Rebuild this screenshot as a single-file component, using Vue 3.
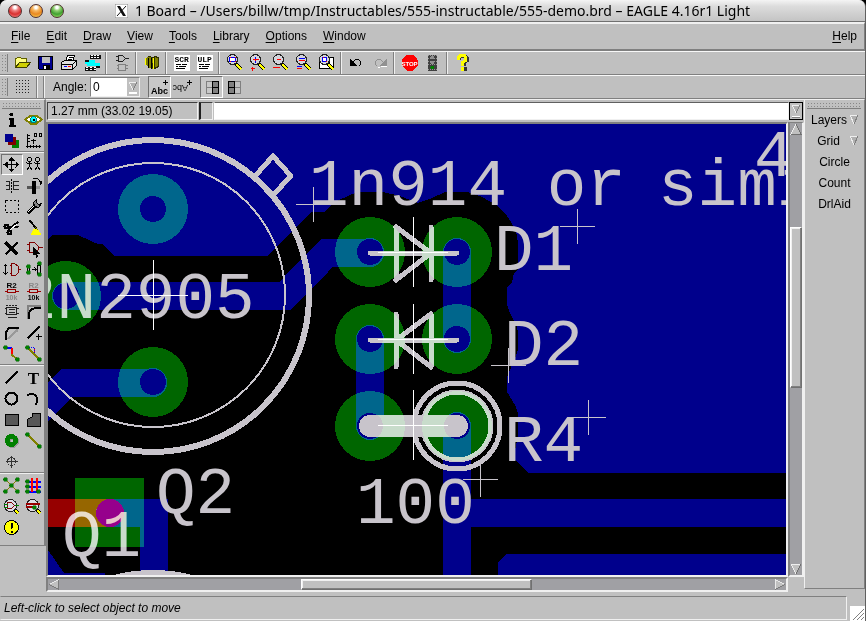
<script setup>
import { ref } from 'vue'

const menus = ['File', 'Edit', 'Draw', 'View', 'Tools', 'Library', 'Options', 'Window']
const layerItems = [
  { name: 'Layers', drop: true },
  { name: 'Grid', drop: true },
  { name: 'Circle' },
  { name: 'Count' },
  { name: 'DrlAid' },
]
const angle = ref('0')
const command = ref('')
const activeTool = ref('Move')

const lens = (mark, extra = '') =>
  `<path d="M11 11l6 6" stroke="#000" stroke-width="4"/><path d="M12 12l5 5" stroke="#ff0" stroke-width="2"/>
   <circle cx="8" cy="7" r="5" fill="#d4d4dc" stroke="#222"/>${mark}${extra}`

const topGroups = [
  [
    ['Open', `<path d="M3 14V6h1l1-1h3l1 1h5v3" fill="#ffff80" stroke="#606000"/><path d="M3 15l4-5h11l-4 5z" fill="#d0d000" stroke="#404000"/>`],
    ['Save', `<path d="M3 4h14v13h-13l-1-1z" fill="#000090" stroke="#000"/><path d="M6 4h8v6h-8z" fill="#c0c0c0"/><path d="M7 12h7v5h-7z" fill="#000"/><path d="M8 13h2v3h-2z" fill="#fff"/>`],
    ['Print', `<path d="M7 9l2-6h7l-2 6" fill="#fff" stroke="#000"/><path d="M10 5h4M9 7h4" stroke="#000"/><path d="M3 10l3-2h12v5l-4 4H3z" fill="#e0e0e0" stroke="#000"/><path d="M3 12h11l3-3M14 12v4" stroke="#000" fill="none"/><path d="M5 14h3" stroke="#00f"/><path d="M9 14h3" stroke="#f00"/>`],
    ['CAM', `<path d="M5 7h8v6H5zM3 7h5v4H3zM11 10h7v3h-7z" fill="#0ff"/><path d="M8 2h11v4H8zM3 7h4v2H3zM3 14h11v4H3zM14 13h4v2h-4z" fill="#111"/><path d="M9 3h2m1 0h2m1 0h2M9 5h2m1 0h2m1 0h2M4 15h2m2 0h2m2 0h2M4 17h2m2 0h2m2 0h2" stroke="#fff"/>`],
  ],
  [['Schematic', `<path d="M7 3h4l3 3-3 3H7zM4 4h3M4 8h3M14 6h3" fill="none" stroke="#222"/><path d="M7 12h7v6H7zM5 13h2M5 16h2M14 13h2M14 16h2" fill="none" stroke="#808080"/>`]],
  [['Use library', `<path d="M3 6l4-2 4 2v11l-4-2-4-4z" fill="#808000"/><path d="M7 4l5 1-1 11M13 4l4 1v9l-4 2z" fill="#808000" stroke="#303000"/><path d="M4 5v7M12 5v11" stroke="#ff0"/><path d="M7 5v10M10 5v11" stroke="#000"/>`]],
  [
    ['Script', `<path d="M2 2h16v16H2z" fill="#fff"/><path d="M4 12h5m1 0h5M4 14h2m1 0h7M4 16h9" stroke="#000"/><text x="3" y="9" font-size="8" font-weight="bold" font-family="Liberation Mono, monospace">SCR</text>`],
    ['Run ULP', `<path d="M2 2h16v16H2z" fill="#fff"/><path d="M4 12h5m1 0h5M4 14h2m1 0h7M4 16h9" stroke="#000"/><text x="3" y="9" font-size="8" font-weight="bold" font-family="Liberation Mono, monospace">ULP</text>`],
  ],
  [
    ['Fit', lens('<path d="M5 5h6v4H5z" fill="#fff" stroke="#00f"/><path d="M5 5h1m4 0h1M5 9h1m4 0h1" stroke="#f00"/>')],
    ['Zoom in', lens('<path d="M5 7h6M8 4v6" stroke="#f00"/><path d="M8 4v2M8 8v2" stroke="#00f"/>', '<path d="M3 16h4M5 14v4" stroke="#f00"/>')],
    ['Zoom out', lens('<path d="M6 7h4" stroke="#f00"/>', '<path d="M2 15h7" stroke="#f00"/>')],
    ['Redraw', lens('<path d="M5 6h6" stroke="#00f"/><path d="M5 8h6" stroke="#f00"/>', '<path d="M3 14h5" stroke="#00f"/><path d="M3 16h5" stroke="#f00"/>')],
    ['Select area', `<path d="M3 10h10V5h4v11H3z" fill="#fff" stroke="#000"/>` + lens('<path d="M6 5h4v4H6z" fill="#fff" stroke="#00f"/><path d="M6 5h1M9 9h1" stroke="#f00"/>')],
  ],
  [
    ['Undo', `<path d="M6 10l3-3h3l2 2v3l-2 2" fill="none" stroke="#000"/><path d="M3 6v7h7z" fill="#000"/>`],
    ['Redo', `<path d="M14 10l-3-3H8L6 9v3l2 2" fill="none" stroke="#909090"/><path d="M17 6v7h-7z" fill="#909090"/><path d="M17 14h-6M8 15h2" stroke="#fff"/>`],
  ],
  [
    ['Stop', `<path d="M7 2h7l4 5v6l-4 5H7l-5-5V7z" fill="#f00"/><text x="10" y="13" text-anchor="middle" font-size="6" font-weight="bold" fill="#fff" font-family="Liberation Sans, sans-serif">STOP</text>`],
    ['Go', `<path d="M5 2h9v16H5z" fill="#404040"/><path d="M5 3h9M5 6h9M5 9h9M5 12h9M5 17h9" stroke="#999" stroke-dasharray="1 1"/><circle cx="10" cy="5" r="2" fill="#909090"/><circle cx="10" cy="10" r="2" fill="#909090"/><circle cx="10" cy="15" r="2" fill="#008000"/>`],
  ],
  [['Help', `<path d="M6 7V5l2-2h4l2 2v3l-3 2v3" fill="none" stroke="#333" stroke-width="4"/><path d="M9 14h5v4H9z" fill="#333"/><path d="M6 7V5l2-2h4l1 2v3l-3 2v3M10 14v4" fill="none" stroke="#ff0" stroke-width="3"/>`]],
]

const dot = (x, y) => `<circle cx="${x}" cy="${y}" r="2" fill="#008000" stroke="#006000" stroke-width=".5"/>`
const probe = (inner) => `<path d="M13 13l4 4" stroke="#000" stroke-width="3"/><path d="M14 14l3 3" stroke="#ff0" stroke-width="2"/><circle cx="9" cy="9" r="6" fill="#dcdce4" stroke="#222"/>${inner}`

const toolGroups = [
  [
    ['Info', `<circle cx="10" cy="5" r="2"/><path d="M7 8h5v7h2v2H7v-2h1v-5H7z"/>`],
    ['Show', `<path d="M2 10l5-4h6l5 4-5 4H7z" fill="#fff" stroke="#808000" stroke-width="2"/><circle cx="10" cy="10" r="3" fill="#0ff" stroke="#008080"/><path d="M9 9h2v2H9z"/>`],
    ['Display', `<path d="M10 9h7v8h-7z" fill="#008000"/><path d="M6 6h8v8H6z" fill="#800000"/><path d="M3 3h8v8H3z" fill="#000090"/>`],
    ['Mark', `<path d="M4 3v14M2 16h15M3 5h3M3 8h3M3 11h3M7 14v3M10 14v3M13 14v3M16 14v3M7 10h5M10 8v5" fill="none" stroke="#000"/><path d="M11 3h2v3h-2zM16 3h2v3h-2z" fill="none" stroke="#000"/>`],
  ],
  [
    ['Move', `<path d="M3 10h14M10 3v14" stroke="#000"/><path d="M10 2l3 4H7zM10 18l3-4H7zM2 10l4-3v6zM18 10l-4-3v6z"/>`],
    ['Copy', `<path d="M6 7v5M3 8l3 2 3-2M6 12l-3 4M6 12l3 4M14 7v5M11 8l3 2 3-2M14 12l-3 4M14 12l3 4" fill="none" stroke="#000"/><circle cx="6" cy="5" r="2" fill="none" stroke="#000"/><circle cx="14" cy="5" r="2" fill="none" stroke="#000"/>`],
    ['Mirror', `<path d="M10 3v14" stroke="#000" stroke-dasharray="2 1"/><path d="M4 6h4v8H4M4 10h4M17 6h-5v8h5M12 10h5" fill="none" stroke="#222"/>`],
    ['Rotate', `<path d="M8 5h4v13H8z"/><path d="M3 10h5v3H3z" fill="#555"/><path d="M12 10h4v3h-4z" fill="#999"/><path d="M9 3h5l3 3v3" fill="none" stroke="#000"/><path d="M14 5h4v4z"/>`],
    ['Group', `<path d="M4 4h13v12H4z" fill="none" stroke="#000" stroke-dasharray="2 2"/>`],
    ['Change', `<path d="M4 17l8-8" stroke="#000" stroke-width="4"/><path d="M4 16l8-8" stroke="#fff"/><path d="M13 3l-3 3 1 4 4 1 3-4-3 1-2-2z" fill="#888" stroke="#000"/>`],
    ['Cut', `<path d="M17 4L7 12M17 10L6 9" stroke="#000" stroke-width="2"/><path d="M16 6L9 12" stroke="#fff"/><circle cx="5" cy="9" r="2" fill="none" stroke="#000" stroke-width="2"/><circle cx="8" cy="15" r="2" fill="none" stroke="#000" stroke-width="2"/>`],
    ['Paste', `<path d="M6 3l7 8" stroke="#000" stroke-width="2"/><path d="M10 11h4l4 6H7z" fill="#ff0"/><path d="M12 10l3 3" stroke="#808000"/>`],
    ['Delete', `<path d="M4 4l12 12" stroke="#000" stroke-width="3"/><path d="M16 4L4 16" stroke="#000" stroke-width="2"/>`],
    ['Add', `<path d="M6 4h5l4 4v3l-4 3H6zM3 6h3M3 12h3M15 9h4" fill="none" stroke="#800000"/><path d="M9 8l7 7h-3l2 3-2 1-1-3-3 1z"/>`],
    ['Pinswap', `<path d="M4 5v10M2 7l2-2 2 2M2 13l2 2 2-2" fill="none" stroke="#000"/><path d="M10 4h3l4 3v6l-3 3h-4zM8 6h2M8 14h2M17 10h2" fill="none" stroke="#800000"/>`],
    ['Replace', `<path d="M8 10h5M11 8l2 2-2 2" fill="none" stroke="#000"/><path d="M4 8h2v4H4zM14 6h3v8h-3z" fill="none" stroke="#000"/>${dot(5, 7)}${dot(5, 13)}${dot(16, 4)}${dot(16, 15)}`],
    ['Name', `<text x="10" y="7" text-anchor="middle" font-size="8" font-weight="bold" font-family="Liberation Sans, sans-serif">R2</text><path d="M3 11h3m8 0h3M6 9h8v3H6z" fill="none" stroke="#900"/><text x="10" y="19" text-anchor="middle" font-size="7" fill="#888" font-weight="bold" font-family="Liberation Sans, sans-serif">10k</text>`],
    ['Value', `<text x="10" y="7" text-anchor="middle" font-size="8" fill="#888" font-weight="bold" font-family="Liberation Sans, sans-serif">R2</text><path d="M3 11h3m8 0h3M6 9h8v3H6z" fill="none" stroke="#900"/><text x="10" y="19" text-anchor="middle" font-size="7" font-weight="bold" font-family="Liberation Sans, sans-serif">10k</text>`],
    ['Smash', `<path d="M5 6h10v7H5zM7 8h6M7 11h6M3 7h2M3 12h2M15 7h2M15 12h2M6 16h9" fill="none" stroke="#222"/><path d="M4 4h12" stroke="#222" stroke-dasharray="2 1"/>`],
    ['Miter', `<path d="M4 17V4h13" fill="none" stroke="#808080" stroke-width="2"/><path d="M5 17v-4q1-7 12-7" fill="none" stroke="#000" stroke-width="2"/>`],
    ['Split', `<path d="M5 16L16 6v3l-9 8z" fill="#999"/><path d="M4 17V10l4-5h9" fill="none" stroke="#000" stroke-width="2"/>`],
    ['Optimize', `<path d="M4 16L16 4" stroke="#000" stroke-width="2"/><path d="M12 14h6M15 11v6" stroke="#000"/>`],
    ['Route', `<path d="M5 4h5" stroke="#00f" stroke-width="2"/><path d="M10 4v7" stroke="#f00" stroke-width="2"/><path d="M10 11l6 5" stroke="#808000" stroke-width="2"/>${dot(4, 4)}${dot(16, 16)}`],
    ['Ripup', `<path d="M5 4h6v7l5 5" fill="none" stroke="#00f" stroke-dasharray="1 1"/><path d="M11 5v6l4 3" fill="none" stroke="#f00" stroke-dasharray="1 1"/><path d="M4 4l12 12" stroke="#808000" stroke-width="2"/>${dot(4, 4)}${dot(16, 16)}`],
  ],
  [
    ['Wire', `<path d="M4 16L16 4" stroke="#000" stroke-width="2"/>`],
    ['Text', `<text x="10" y="16" text-anchor="middle" font-size="17" font-weight="bold" font-family="Liberation Serif, serif">T</text>`],
    ['Circle', `<circle cx="10" cy="10" r="6" fill="none" stroke="#000" stroke-width="2"/>`],
    ['Arc', `<path d="M4 7a6 6 0 1 1 8 9" fill="none" stroke="#000" stroke-width="2"/>`],
    ['Rect', `<path d="M4 5h13v11H4z" fill="url(#hatch)" stroke="#000"/>`],
    ['Polygon', `<path d="M4 17v-7l5-3V4h8v13z" fill="url(#hatch)" stroke="#000"/>`],
    ['Via', `<circle cx="11" cy="11" r="4" fill="none" stroke="#999" stroke-width="5"/><circle cx="10" cy="10" r="4" fill="none" stroke="#008000" stroke-width="5"/>`],
    ['Signal', `<path d="M4 4l12 12" stroke="#808000" stroke-width="2"/>${dot(4, 4)}${dot(16, 16)}`],
    ['Hole', `<circle cx="10" cy="10" r="4" fill="none" stroke="#333"/><path d="M4 10h12M10 4v12" stroke="#333"/>`],
  ],
  [
    ['Ratsnest', `<path d="M4 4l12 12M16 4L4 16" stroke="#808000"/>${dot(4, 4)}${dot(16, 16)}${dot(16, 4)}${dot(4, 16)}${dot(10, 10)}`],
    ['Auto', `<path d="M3 6h14M3 11h14M3 16h14" stroke="#00f" stroke-width="2"/><path d="M8 2v14M13 2v14" stroke="#f00" stroke-width="2"/>${dot(4, 6)}${dot(4, 11)}${dot(4, 16)}${dot(15, 16)}`],
    ['ERC', probe(`<path d="M6 6h4l3 3-3 3H6z" fill="none" stroke="#800000"/><path d="M2 8h4M2 11h4M13 9h4" stroke="#008000"/>`)],
    ['DRC', probe(`<path d="M2 7h14M2 10h8" stroke="#900" stroke-width="2"/>${dot(11, 11)}`)],
    ['Errors', `<circle cx="10" cy="10" r="7" fill="#ff0" stroke="#000"/><path d="M9 5h3l-1 6H9zM9 13h2v2H9z"/>`],
  ],
]

const pads = [[153, 209], [66, 296], [153, 382], [370, 252], [457, 252], [370, 339], [457, 339], [370, 426], [457, 426]]
const labels = [
  ['2N2905', 17, 318], ['1n914 or', 309, 205], ['simi', 658, 205], ['4', 754, 176], ['D1', 494, 270], ['D2', 504, 365],
  ['R4', 504, 461], ['100', 356, 523], ['Q2', 156, 513], ['Q1', 62, 556],
]
const origins = [[153, 295], [413, 252], [413, 339], [413, 425]]
const anchors = [[313, 204], [577, 226], [508, 365], [588, 417], [480, 479]]
</script>

<template>
  <div class="window">
    <header class="titlebar">
      <div class="lights">
        <button class="light red" aria-label="Close"></button>
        <button class="light amber" aria-label="Minimize"></button>
        <button class="light green" aria-label="Zoom"></button>
      </div>
      <h1>
        <svg class="xlogo" viewBox="0 0 13 14" aria-hidden="true">
          <path d="M0 0h13v14H0z" fill="#fff" stroke="#888" />
          <path d="M2 2h3l6 10H8z" fill="#111" />
          <path d="M11 2L2 12" stroke="#111" />
        </svg>
        1 Board – /Users/billw/tmp/Instructables/555-instructable/555-demo.brd – EAGLE 4.16r1 Light
      </h1>
    </header>

    <nav class="menubar">
      <button v-for="m in menus" :key="m"><u>{{ m[0] }}</u>{{ m.slice(1) }}</button>
      <button class="help"><u>H</u>elp</button>
    </nav>

    <div class="toolbar">
      <div v-for="(g, i) in topGroups" :key="i" class="group">
        <span v-if="i === 0" class="grip"></span>
        <button v-for="[name, art] in g" :key="name" :aria-label="name">
          <svg viewBox="0.5 0.5 20 20" v-html="art"></svg>
        </button>
      </div>
    </div>

    <div class="toolbar params">
      <div class="group">
        <span class="grip"></span>
        <button aria-label="Grid">
          <svg viewBox="0.5 0.5 20 20"><path d="M3 4h15M3 7h15M3 10h15M3 13h15M3 16h15" stroke="#222" stroke-dasharray="1 2" /></svg>
        </button>
      </div>
      <div class="group slim"></div>
      <div class="group angle">
        <label for="angle">Angle:</label>
        <span class="combo">
          <select id="angle" v-model="angle"><option>0</option><option>45</option><option>90</option></select>
          <svg viewBox="0 0 12 18" aria-hidden="true">
            <path d="M0 0h12v18H0z" fill="#c0c0c0" />
            <path d="M2 4h8L6 12z" fill="#b0b0b0" stroke="#eee" /><path d="M10 4l-4 8" stroke="#808080" /><path d="M2 15h8" stroke="#fff" stroke-width="2" />
          </svg>
        </span>
      </div>
      <div class="group toggles">
        <button class="down" aria-label="Normal text">
          <svg viewBox="0 0 20 20"><text x="1" y="17" font-size="9" font-weight="bold" font-family="Liberation Sans, sans-serif">Abc</text><path d="M13 5h5M15 3v5" stroke="#000" fill="none" /></svg>
        </button>
        <button aria-label="Mirrored text">
          <svg viewBox="0 0 20 20"><text x="-15" y="-8" font-size="9" transform="rotate(180)" font-family="Liberation Sans, sans-serif">Abc</text><path d="M14 5h5M16 3v5" stroke="#000" fill="none" /></svg>
        </button>
      </div>
      <div class="group toggles sides">
        <button class="down" aria-label="Top side">
          <svg viewBox="0.5 0.5 20 20"><path d="M5 5h6v12H5zM5 11h6" fill="none" stroke="#808080" /><path d="M11 5h6v12h-6zM11 11h6" fill="#808080" stroke="#000" /></svg>
        </button>
        <button aria-label="Bottom side">
          <svg viewBox="0.5 0.5 20 20"><path d="M10 5h6v12h-6zM10 11h6" fill="none" stroke="#808080" /><path d="M4 5h6v12H4zM4 11h6" fill="#808080" stroke="#000" /></svg>
        </button>
      </div>
    </div>

    <main>
      <aside class="tools">
        <span class="handle"></span>
        <div v-for="(g, i) in toolGroups" :key="i" class="toolset">
          <button v-for="[name, art] in g" :key="name" :class="{ down: name === activeTool }" :aria-label="name" @click="activeTool = name">
            <svg viewBox="0.5 0.5 20 20" v-html="art"></svg>
          </button>
        </div>
      </aside>

      <section class="work">
        <div class="cmdrow">
          <output class="coords">1.27 mm (33.02 19.05)</output>
          <span class="well"></span>
          <input v-model="command" class="cmd" aria-label="Command" />
          <button class="history" aria-label="History">
            <svg viewBox="0 0 12 16"><path d="M2 2h8L6 10z" fill="#b0b0b0" stroke="#eee" /><path d="M10 2L6 10" stroke="#808080" /><path d="M2 13h8" stroke="#fff" /><path d="M2 14h8" stroke="#808080" /></svg>
          </button>
        </div>

        <div class="board">
          <svg viewBox="48 124 738 451" preserveAspectRatio="xMinYMin slice">
            <defs>
              <pattern id="hatch" width="2" height="2" patternUnits="userSpaceOnUse">
                <path d="M0 0h2v2H0z" fill="#b0b0b0" /><path d="M0 0h1v1H0zM1 1h1v1H1z" fill="#000" />
              </pattern>
            </defs>
            <path class="copper" d="M48 124h738v451H48z" />
            <path d="M48 239L53 235H78L91 241 98 244H102L114 256H267L311 212H324L335 202 350 195 358 192H383L400 196 418 203 432 198 445 192H468L482 197 496 205 507 216 511 222 517 235 518 245V270L514 273 512 282 507 288V305L510 313 517 327 518 333V350L515 358 507 377V392L515 405 518 413V437L515 450V460L528 473H786V575H48z" />
            <path class="copper" d="M498 575v-13l9-8h279v21zM48 550l16 23h41v2H48z" />
            <g class="trace">
              <path d="M66 296H285l42-43H370M457 252V339M370 339V426M457 426V600M457 513H800M153 383H67L20 430M110 513H154V600" />
            </g>
            <circle v-for="[x, y] in pads" :key="`h${x}-${y}`" class="copper" :cx="x" :cy="y" r="14" />
            <circle class="copper" cx="110" cy="513" r="14" />

            <g class="silk">
              <circle cx="153" cy="296" r="156" stroke-width="6" />
              <circle cx="153" cy="295" r="132" stroke-width="2" />
              <circle cx="153" cy="729" r="156" stroke-width="6" />
              <path d="M256 175l17-19 18 20-18 19" />
              <path d="M370 253H457M396 227V280M431 227V280M396 227L431 253L396 280" />
              <path d="M370 340H457M396 314V367M431 314V367M431 314L396 340L431 367" />
              <path d="M370 426H457" stroke-width="22" />
              <circle cx="457" cy="426" r="43" />
              <circle cx="457" cy="426" r="34" />
            </g>
            <g class="caption">
              <text v-for="[t, x, y] in labels" :key="t" :x="x" :y="y">{{ t }}</text>
            </g>

            <g class="blend">
              <circle v-for="[x, y] in pads" :key="`p${x}-${y}`" class="pad" :cx="x" :cy="y" r="24" />
            </g>
            <path class="blend square" d="M75 478h69v69H75zM110 499a14 14 0 1 0 .1 0z" />
            <path class="blend top" d="M30 513H110" />

            <path v-for="[x, y] in anchors" :key="`a${x}`" class="anchor" :d="`M${x - 17} ${y + 0.5}h35M${x + 0.5} ${y - 17}v35`" />
            <path v-for="[x, y] in origins" :key="`o${y}`" class="origin" :d="`M${x - 35} ${y + 0.5}h70M${x + 0.5} ${y - 35}v70`" />
          </svg>
        </div>

        <div class="scroll vertical">
          <button aria-label="Scroll up"><svg viewBox="0 0 12 12"><path d="M6 1l5 10H1z" fill="#c0c0c0" stroke="#eee" /><path d="M6 1l5 10H1" fill="none" stroke="#707070" /><path d="M6 1L1 11" stroke="#eee" /></svg></button>
          <i class="vbefore"></i><i class="thumb vthumb"></i><i class="vafter"></i>
          <button aria-label="Scroll down"><svg viewBox="0 0 12 12"><path d="M1 1h10L6 11z" fill="#c0c0c0" stroke="#eee" /><path d="M11 1L6 11" stroke="#707070" /></svg></button>
        </div>
        <div class="scroll horizontal">
          <button aria-label="Scroll left"><svg viewBox="0 0 12 12"><path d="M1 6l10-5v10z" fill="#c0c0c0" stroke="#eee" /><path d="M1 6l10 5V1" fill="none" stroke="#707070" /></svg></button>
          <i class="hbefore"></i><i class="thumb hthumb"></i><i class="hafter"></i>
          <button aria-label="Scroll right"><svg viewBox="0 0 12 12"><path d="M11 6L1 1v10z" fill="#c0c0c0" stroke="#eee" /><path d="M11 6L1 11" stroke="#707070" /></svg></button>
        </div>
      </section>

      <aside class="panel">
        <span class="handle"></span>
        <button v-for="l in layerItems" :key="l.name">
          {{ l.name }}
          <svg v-if="l.drop" viewBox="0 0 8 9" aria-hidden="true"><path d="M0 0h8L4 9z" fill="#b0b0b0" /><path d="M0 0h8M0 0l4 9" stroke="#eee" fill="none" /><path d="M8 0L4 9" stroke="#808080" /></svg>
        </button>
      </aside>
    </main>

    <footer class="statusbar">
      <p>Left-click to select object to move</p>
      <svg viewBox="0 0 15 15" aria-hidden="true"><path d="M0 0h15v15H0z" fill="#fff" /><path d="M3 14L14 3M7 14l7-7M11 14l3-3" stroke="#808080" /></svg>
    </footer>
  </div>
</template>

<style>
body { margin: 0; background: #000; }
</style>

<style scoped>
* { box-sizing: border-box; }
.window {
  display: flex; flex-direction: column; height: 100vh; overflow: hidden;
  background: #c0c0c0; border-radius: 7px 7px 0 0; border-right: 1px solid #606060;
  font: 12px/16px "Liberation Sans", sans-serif; color: #000;
}
button { font: inherit; color: inherit; background: none; border: 0; padding: 0; margin: 0; }
svg { display: block; shape-rendering: crispEdges; fill: #000; }

.titlebar {
  display: grid; grid-template-columns: 72px 1fr 72px; align-items: center; height: 22px;
  background: linear-gradient(#f4f4f4, #dcdcdc 30%, #c4c4c4); border-bottom: 1px solid #707070;
}
.lights { display: flex; gap: 7px; padding-left: 8px; }
.light { width: 14px; height: 14px; border-radius: 50%; border: 1px solid #503030; }
.red { background: radial-gradient(circle at 50% 20%, #fff 0 10%, #f08080 30%, #d83030 60%, #ff9090); }
.amber { background: radial-gradient(circle at 50% 20%, #fff 0 10%, #f8b860 30%, #e88820 60%, #ffe060); }
.green { background: radial-gradient(circle at 50% 20%, #fff 0 10%, #90d070 30%, #40a030 60%, #b0f070); }
h1 { display: flex; align-items: center; justify-content: center; gap: 7px; margin: 0; font: 14px/20px "Noto Sans", sans-serif; white-space: nowrap; }
.xlogo { width: 13px; height: 14px; flex: none; shape-rendering: auto; }

.menubar { display: flex; gap: 16px; height: 29px; padding: 0 7px 2px 11px; align-items: center; border-top: 2px solid #f0f0f0; border-bottom: 2px solid #808080; border-right: 1px solid #808080; }
.menubar u { text-underline-offset: 2px; }
.help { margin-left: auto; }

.toolbar { display: flex; height: 24px; border-top: 1px solid #f8f8f8; border-bottom: 1px solid #808080; }
.group { display: flex; align-items: center; padding: 0 2px 0 3px; border-left: 1px solid #f0f0f0; border-right: 1px solid #808080; }
.group:last-child { flex: 1; border-right: 0; }
.toolbar button { width: 23px; height: 22px; display: grid; place-items: center; }
.toolbar button svg, .toolset svg { width: 20px; height: 20px; }
.toolbar .group:first-child { padding-left: 1px; border-left: 0; }
.grip {
  width: 7px; height: 18px; margin-right: 3px; border-right: 1px solid #808080;
  background: radial-gradient(circle, #888 0 1px, transparent 1px) 0 0 / 3px 3px;
}
.slim { width: 7px; padding: 0; }
.params .angle { gap: 3px; padding-left: 8px; border-right: 0; }
.combo { display: flex; height: 20px; border: 1px solid; border-color: #808080 #f0f0f0 #f0f0f0 #808080; }
.combo select { appearance: none; width: 36px; border: 0; border-radius: 0; margin: 0; padding: 0 2px; background: #fff; font: inherit; color: #000; }
.combo svg { width: 12px; height: 18px; }
.params .toggles { border: 0; padding: 0 4px 0 6px; }
.params .sides { padding-left: 2px; }
.down { border: 1px solid; border-color: #707070 #fff #fff #707070; background: #c8c8c8; }

main { flex: 1; min-height: 0; display: flex; align-items: flex-start; }
.tools { width: 46px; padding-bottom: 7px; border-right: 2px solid #808080; border-bottom: 1px solid #808080; border-top: 1px solid #f0f0f0; }
.handle {
  display: block; height: 7px; margin: 2px 3px 0 2px; border-bottom: 1px solid #808080;
  background: radial-gradient(circle, #888 0 1px, transparent 1px) 0 0 / 3px 3px;
}
.toolset { display: grid; grid-template-columns: 22px 22px; grid-auto-rows: 21px; padding-left: 1px; }
.toolset + .toolset { border-top: 1px solid #808080; box-shadow: inset 0 1px #f0f0f0; padding-top: 2px; }
.toolset button { display: grid; place-items: center; }

.work { flex: 1; min-width: 0; align-self: stretch; display: grid; grid-template: 23px 1fr 15px / 1fr 16px; }
.cmdrow { grid-column: 1 / 3; display: flex; padding: 2px 1px 2px 1px; border-top: 1px solid #f0f0f0; }
.coords { width: 151px; padding: 0 3px; white-space: nowrap; border: 1px solid; border-color: #404040 #f0f0f0 #f0f0f0 #404040; }
.well { width: 14px; margin: 0 1px; border: 1px solid; border-color: #404040 #f0f0f0 #f0f0f0 #202020; border-left-width: 2px; }
.cmd { flex: 1; min-width: 0; border: 1px solid; border-color: #606060 #f0f0f0 #f0f0f0 #fff; background: #fff; padding: 0 3px; font: inherit; }
.history { width: 14px; border: 1px solid #000; background: #c0c0c0; }
.board { border: 2px solid; border-color: #808080 #f0f0f0 #f0f0f0 #808080; min-height: 0; overflow: hidden; background: #00008c; }
.board svg { width: 100%; height: 100%; }
.copper { fill: #00008c; }
.trace path { fill: none; stroke: #00008c; stroke-width: 28; stroke-linecap: round; }
.silk { fill: none; stroke: #c8c4cb; stroke-width: 5; stroke-linecap: round; stroke-linejoin: round; }
.caption { fill: #c8c4cb; font: 66px "Liberation Mono", monospace; white-space: pre; }
.blend { mix-blend-mode: screen; }
.pad { fill: none; stroke: #006600; stroke-width: 22; }
.square { fill: #006600; fill-rule: evenodd; }
.top { fill: none; stroke: #960000; stroke-width: 28; stroke-linecap: round; }
.anchor { stroke: #c8c4cb; fill: none; }
.origin { stroke: #fff; fill: none; }

.scroll { display: flex; background: #a0a0a4; border: 2px solid; border-color: #808080 #f0f0f0 #f0f0f0 #808080; }
.scroll button { flex: none; width: 12px; height: 12px; }
.scroll svg { width: 12px; height: 12px; }
.vertical { flex-direction: column; border-top-width: 1px; }
.horizontal { height: 15px; }
.horizontal button, .horizontal svg { height: 11px; }
.thumb { background: #c0c0c0; border: 1px solid; border-color: #fff #707070 #707070 #fff; box-shadow: inset -1px -1px #808080, inset 1px 1px #f0f0f0; }
.vbefore { flex: 92; } .vthumb { flex: 158; } .vafter { flex: 175; }
.hbefore { flex: 242; } .hthumb { flex: 229; } .hafter { flex: 243; }

.panel { width: 61px; align-self: stretch; margin-bottom: 3px; border: 1px solid; border-color: #f0f0f0 #808080 #808080 #f0f0f0; display: flex; flex-direction: column; align-items: center; }
.panel .handle { align-self: stretch; }
.panel button { height: 21px; display: flex; align-items: center; gap: 3px; }
.panel button:nth-of-type(2) { gap: 10px; padding-left: 6px; }
.panel svg { width: 8px; height: 9px; }

.statusbar { display: flex; height: 29px; padding-top: 4px; align-items: flex-end; justify-content: space-between; }
.statusbar p { flex: 1; margin: 0 3px 1px 0; height: 24px; padding: 3px; font-style: italic; border: 1px solid; border-color: #808080 #f0f0f0 #f0f0f0 #c0c0c0; }
.statusbar svg { width: 15px; height: 15px; }
</style>
